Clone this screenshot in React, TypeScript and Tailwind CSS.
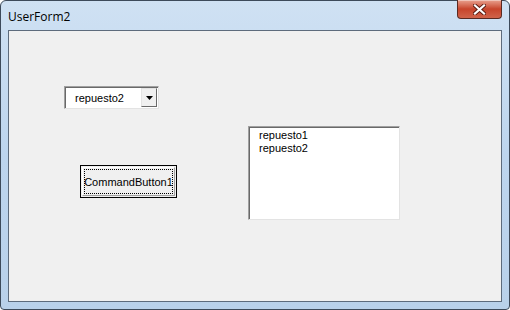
export default function App() {
  return (
    <div className="w-[510px] h-[310px] bg-white">
      {/* Aero window frame */}
      <div className="w-[510px] h-[310px] flex flex-col rounded-t-[6px] rounded-b-[4px] border border-[#3d4a5a] bg-gradient-to-b from-[#cfe1f3] via-[#bdd5ee] to-[#b9d1ea]">
        {/* Title bar */}
        <div className="h-[29px] flex items-start justify-between pl-[7px] pr-[7px]">
          <span className="mt-[8px] text-[12px] leading-[15px] text-black [font-family:'Open_Sans','Noto_Sans',sans-serif]">
            UserForm2
          </span>
          <button className="w-[45px] h-[19px] -mt-px flex items-center justify-center rounded-b-[4px] border border-[#5a2a22] border-t-0 bg-gradient-to-b from-[#e8a08e] via-[#c7442b] to-[#d0634a] shadow-[inset_0_1px_0_rgba(255,255,255,0.4)]">
            <svg width="13" height="11" viewBox="0 0 13 11">
              <path d="M2 1.5 L11 9.5 M11 1.5 L2 9.5" stroke="#5b1b10" strokeWidth="4" strokeLinecap="square" />
              <path d="M2 1.5 L11 9.5 M11 1.5 L2 9.5" stroke="#ffffff" strokeWidth="2.2" strokeLinecap="square" />
            </svg>
          </button>
        </div>

        {/* Client area */}
        <div className="mx-[7px] mb-[7px] flex-1 border border-[#5d6b7c]">
          <div className="relative w-full h-full bg-[#f0f0f0] [font-family:'Liberation_Sans',Arial,sans-serif] text-[11px] text-black">
            {/* ComboBox */}
            <div className="absolute left-[55px] top-[55px] w-[95px] h-[23px] flex bg-white border border-[#a0a0a0] border-r-[#e3e3e3] border-b-[#e3e3e3] shadow-[inset_1px_1px_0_#696969]">
              <span className="flex-1 pl-[10px] pt-[4px] leading-[14px]">repuesto2</span>
              <div className="w-[16px] my-px mr-px flex items-center justify-center bg-[#f0f0f0] border border-[#e3e3e3] border-r-[#696969] border-b-[#696969]">
                <svg width="7" height="4" viewBox="0 0 7 4">
                  <path d="M0 0 H7 L3.5 4 Z" fill="#000" />
                </svg>
              </div>
            </div>

            {/* CommandButton */}
            <button className="absolute left-[71px] top-[134px] w-[97px] h-[33px] p-[1px] bg-[#f0f0f0] border border-black">
              <div className="w-full h-full border border-[#fff] border-r-[#a0a0a0] border-b-[#a0a0a0] p-[1px]">
                <div className="w-full h-full flex items-center justify-center pt-[2px] outline-1 outline-dotted outline-[#000] -outline-offset-1">
                  CommandButton1
                </div>
              </div>
            </button>

            {/* ListBox */}
            <div className="absolute left-[239px] top-[95px] w-[152px] h-[94px] bg-white border border-[#a0a0a0] border-r-[#e3e3e3] border-b-[#e3e3e3] shadow-[inset_1px_1px_0_#696969] pl-[10px] pt-[2px] leading-[13px]">
              <div>repuesto1</div>
              <div>repuesto2</div>
            </div>
          </div>
        </div>
      </div>
    </div>
  );
}
